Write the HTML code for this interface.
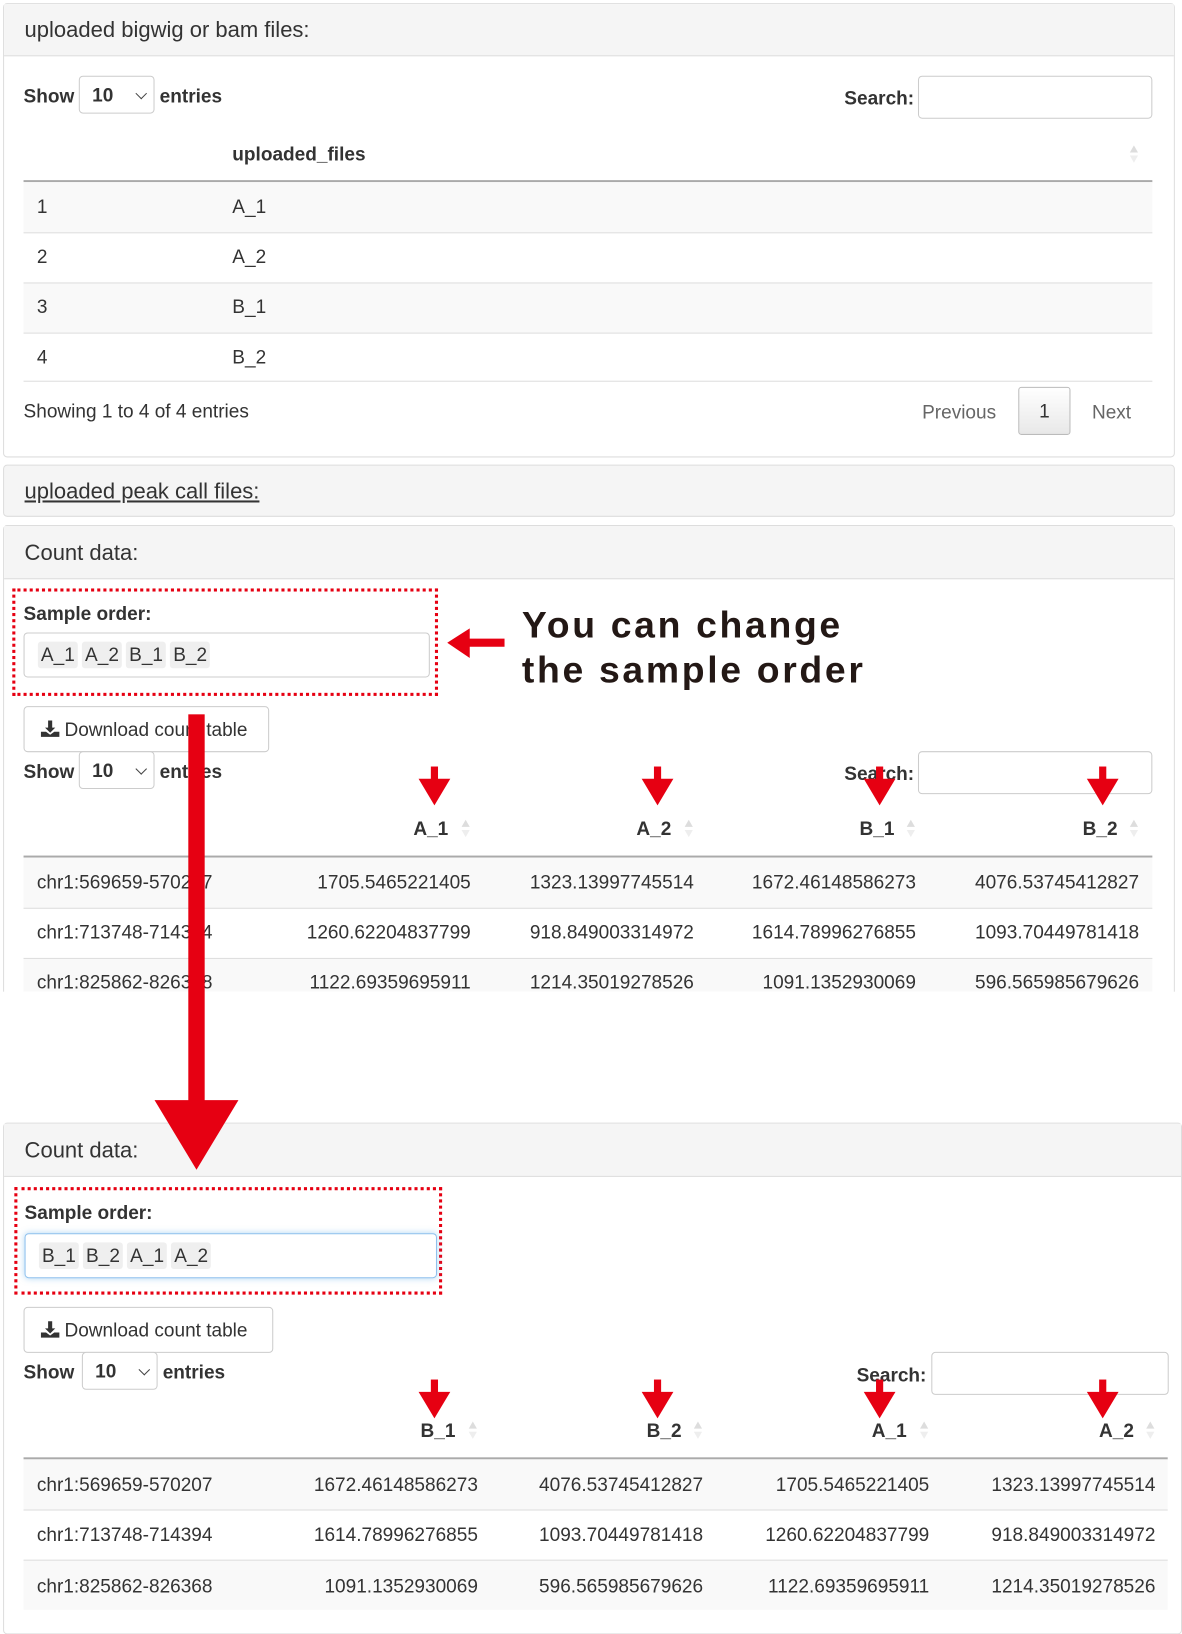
<!DOCTYPE html>
<html><head><meta charset="utf-8"><style>
*{box-sizing:border-box;margin:0;padding:0}
body{width:1182px;height:1608px;overflow:hidden;background:#fff;font-family:"Liberation Sans",Arial,sans-serif;color:#333}
#w{position:absolute;left:0;top:0;width:1155px;height:1572px;transform:scale(1.0234);transform-origin:0 0}
.a{position:absolute}
.panel{position:absolute;border:1px solid #ddd;border-radius:4px;background:#fff}
.ph{position:absolute;left:0;right:0;top:0;background:#f5f5f5;border-bottom:1px solid #ddd;font-size:21.5px;padding-left:20px}
.t{position:absolute;font-size:18.6px;line-height:20px;white-space:nowrap}
.b{font-weight:bold}
.inp{position:absolute;border:1px solid #ccc;border-radius:4px;background:#fff}
.sel{position:absolute;border:1px solid #ccc;border-radius:4px;background:#fff;font-size:18.6px;font-weight:bold;padding-left:12px}
.sel:after{content:"";position:absolute;right:8px;top:50%;width:7px;height:7px;border-right:1.3px solid #444;border-bottom:1.3px solid #444;transform:translateY(-70%) rotate(45deg)}
.row{position:absolute;left:23px;height:49px;border-top:1px solid #ddd}
.st{background:#f9f9f9}
.hl{position:absolute;left:23px;height:2px;background:#aaa}
.r{text-align:right}
.tag{display:inline-block;background:#efefef;border-radius:3px;padding:2px 3px;margin-right:4px;font-size:18.6px}
.btn{position:absolute;border:1px solid #ccc;border-radius:4px;background:#fff;font-size:18.6px;padding-left:15px}
.btn svg{vertical-align:-2px;margin-right:4px}
.dot{position:absolute;border:3px dotted #e60012}
.sort{position:absolute;width:8px;height:18px}
.sort:before{content:"";position:absolute;left:0;top:0;border-left:4px solid transparent;border-right:4px solid transparent;border-bottom:7px solid #ddd}
.sort:after{content:"";position:absolute;left:0;top:10px;border-left:4px solid transparent;border-right:4px solid transparent;border-top:7px solid #eee}
</style></head><body><div id="w">

<!-- Panel 1 -->
<div class="panel" style="left:3px;top:3px;width:1145px;height:444px">
 <div class="ph" style="height:51px;line-height:51px">uploaded bigwig or bam files:</div>
</div>
<div class="t b" style="left:23px;top:84px">Show</div>
<div class="sel" style="left:77px;top:74px;width:74px;height:37px;line-height:35px">10</div>
<div class="t b" style="left:156px;top:84px">entries</div>
<div class="t b" style="left:825px;top:86px">Search:</div>
<div class="inp" style="left:897px;top:74px;width:229px;height:42px"></div>
<div class="t b" style="left:227px;top:141px">uploaded_files</div>
<div class="sort" style="left:1104px;top:142px"></div>
<div class="hl" style="top:176px;width:1103px"></div>
<div class="row st" style="top:178px;width:1103px;border-top:none"></div>
<div class="row" style="top:227px;width:1103px"></div>
<div class="row st" style="top:276px;width:1103px"></div>
<div class="row" style="top:325px;width:1103px;border-bottom:1px solid #ddd;height:48px"></div>
<div class="t" style="left:36px;top:192px">1</div><div class="t" style="left:227px;top:192px">A_1</div>
<div class="t" style="left:36px;top:241px">2</div><div class="t" style="left:227px;top:241px">A_2</div>
<div class="t" style="left:36px;top:290px">3</div><div class="t" style="left:227px;top:290px">B_1</div>
<div class="t" style="left:36px;top:339px">4</div><div class="t" style="left:227px;top:339px">B_2</div>
<div class="t" style="left:23px;top:392px">Showing 1 to 4 of 4 entries</div>
<div class="t" style="left:901px;top:393px;color:#666">Previous</div>
<div class="a" style="left:995px;top:378px;width:51px;height:47px;border:1px solid #bbb;border-radius:3px;background:linear-gradient(#fff,#e8e8e8);font-size:18.6px;text-align:center;line-height:45px">1</div>
<div class="t" style="left:1067px;top:393px;color:#666">Next</div>

<!-- Panel 2 -->
<div class="panel" style="left:3px;top:454px;width:1145px;height:51px;background:#f5f5f5">
 <div class="a" style="left:20px;top:0;line-height:50px;font-size:21.5px;text-decoration:underline">uploaded peak call files:</div>
</div>

<!-- Panel 3 -->
<div class="panel" style="left:3px;top:513px;width:1145px;height:470px">
 <div class="ph" style="height:52px;line-height:52px">Count data:</div>
</div>
<div class="dot" style="left:12px;top:575px;width:416px;height:105px"></div>
<div class="t b" style="left:23px;top:590px">Sample order:</div>
<div class="inp" style="left:23px;top:618px;width:397px;height:44px;padding:8px 0 0 13px"><span class="tag">A_1</span><span class="tag">A_2</span><span class="tag">B_1</span><span class="tag">B_2</span></div>
<svg class="a" style="left:435px;top:612px" width="60" height="34"><polygon points="2,16 24,2 24,12 58,12 58,20 24,20 24,31" fill="#e60012"/></svg>
<div class="a b" style="left:510px;top:589px;font-size:36.5px;line-height:44px;letter-spacing:2.6px;color:#231815;white-space:nowrap">You can change<br>the sample order</div>
<div class="btn" style="left:23px;top:690px;width:240px;height:45px;line-height:43px"><svg width="20" height="18" viewBox="0 0 20 18"><path d="M8 1h4v7h3l-5 5-5-5h3z" fill="#333"/><path d="M1 12h5l4 3 4-3h5v5H1z" fill="#333"/></svg>Download count table</div>
<div class="t b" style="left:23px;top:744px">Show</div>
<div class="sel" style="left:77px;top:734px;width:74px;height:37px;line-height:35px">10</div>
<div class="t b" style="left:156px;top:744px">entries</div>
<div class="t b" style="left:825px;top:746px">Search:</div>
<div class="inp" style="left:897px;top:734px;width:229px;height:42px"></div>
<div class="t b r" style="left:380px;width:58px;top:800px">A_1</div><div class="sort" style="left:451px;top:801px"></div>
<div class="t b r" style="left:598px;width:58px;top:800px">A_2</div><div class="sort" style="left:669px;top:801px"></div>
<div class="t b r" style="left:816px;width:58px;top:800px">B_1</div><div class="sort" style="left:886px;top:801px"></div>
<div class="t b r" style="left:1034px;width:58px;top:800px">B_2</div><div class="sort" style="left:1104px;top:801px"></div>
<div class="hl" style="top:836px;width:1103px"></div>
<div class="row st" style="top:838px;width:1103px;border-top:none"></div>
<div class="row" style="top:887px;width:1103px"></div>
<div class="row st" style="top:936px;width:1103px;height:33px"></div>
<div class="t" style="left:36px;top:852px">chr1:569659-570207</div>
<div class="t r" style="left:260px;width:200px;top:852px">1705.5465221405</div><div class="t r" style="left:478px;width:200px;top:852px">1323.13997745514</div><div class="t r" style="left:695px;width:200px;top:852px">1672.46148586273</div><div class="t r" style="left:913px;width:200px;top:852px">4076.53745412827</div>
<div class="t" style="left:36px;top:901px">chr1:713748-714394</div>
<div class="t r" style="left:260px;width:200px;top:901px">1260.62204837799</div><div class="t r" style="left:478px;width:200px;top:901px">918.849003314972</div><div class="t r" style="left:695px;width:200px;top:901px">1614.78996276855</div><div class="t r" style="left:913px;width:200px;top:901px">1093.70449781418</div>
<div class="a" style="left:0;top:936px;width:1155px;height:33px;overflow:hidden">
<div class="t" style="left:36px;top:14px">chr1:825862-826368</div>
<div class="t r" style="left:260px;width:200px;top:14px">1122.69359695911</div><div class="t r" style="left:478px;width:200px;top:14px">1214.35019278526</div><div class="t r" style="left:695px;width:200px;top:14px">1091.1352930069</div><div class="t r" style="left:913px;width:200px;top:14px">596.565985679626</div>
</div>
<div class="a" style="left:0;top:969px;width:1155px;height:128px;background:#fff"></div>

<!-- Panel 4 -->
<div class="panel" style="left:3px;top:1097px;width:1152px;height:500px">
 <div class="ph" style="height:52px;line-height:52px">Count data:</div>
</div>
<div class="dot" style="left:14px;top:1160px;width:418px;height:105px"></div>
<div class="t b" style="left:24px;top:1175px">Sample order:</div>
<div class="inp" style="left:24px;top:1205px;width:403px;height:44px;padding:8px 0 0 13px;border-color:#8fc1ee;box-shadow:0 0 6px rgba(102,175,233,.5)"><span class="tag">B_1</span><span class="tag">B_2</span><span class="tag">A_1</span><span class="tag">A_2</span></div>
<div class="btn" style="left:23px;top:1277px;width:244px;height:45px;line-height:43px"><svg width="20" height="18" viewBox="0 0 20 18"><path d="M8 1h4v7h3l-5 5-5-5h3z" fill="#333"/><path d="M1 12h5l4 3 4-3h5v5H1z" fill="#333"/></svg>Download count table</div>
<div class="t b" style="left:23px;top:1331px">Show</div>
<div class="sel" style="left:80px;top:1321px;width:74px;height:37px;line-height:35px">10</div>
<div class="t b" style="left:159px;top:1331px">entries</div>
<div class="t b" style="left:837px;top:1334px">Search:</div>
<div class="inp" style="left:910px;top:1321px;width:232px;height:42px"></div>
<div class="t b r" style="left:387px;width:58px;top:1388px">B_1</div><div class="sort" style="left:458px;top:1389px"></div>
<div class="t b r" style="left:608px;width:58px;top:1388px">B_2</div><div class="sort" style="left:678px;top:1389px"></div>
<div class="t b r" style="left:828px;width:58px;top:1388px">A_1</div><div class="sort" style="left:899px;top:1389px"></div>
<div class="t b r" style="left:1050px;width:58px;top:1388px">A_2</div><div class="sort" style="left:1120px;top:1389px"></div>
<div class="hl" style="top:1424px;width:1118px"></div>
<div class="row st" style="top:1426px;width:1118px;border-top:none"></div>
<div class="row" style="top:1475px;width:1118px"></div>
<div class="row st" style="top:1524px;width:1118px"></div>
<div class="t" style="left:36px;top:1441px">chr1:569659-570207</div>
<div class="t r" style="left:267px;width:200px;top:1441px">1672.46148586273</div><div class="t r" style="left:487px;width:200px;top:1441px">4076.53745412827</div><div class="t r" style="left:708px;width:200px;top:1441px">1705.5465221405</div><div class="t r" style="left:929px;width:200px;top:1441px">1323.13997745514</div>
<div class="t" style="left:36px;top:1490px">chr1:713748-714394</div>
<div class="t r" style="left:267px;width:200px;top:1490px">1614.78996276855</div><div class="t r" style="left:487px;width:200px;top:1490px">1093.70449781418</div><div class="t r" style="left:708px;width:200px;top:1490px">1260.62204837799</div><div class="t r" style="left:929px;width:200px;top:1490px">918.849003314972</div>
<div class="t" style="left:36px;top:1540px">chr1:825862-826368</div>
<div class="t r" style="left:267px;width:200px;top:1540px">1091.1352930069</div><div class="t r" style="left:487px;width:200px;top:1540px">596.565985679626</div><div class="t r" style="left:708px;width:200px;top:1540px">1122.69359695911</div><div class="t r" style="left:929px;width:200px;top:1540px">1214.35019278526</div>

<!-- Red arrows -->
<svg class="a" style="left:0;top:0" width="1155" height="1572">
 <g fill="#e60012">
  <rect x="184" y="698" width="16" height="380"/>
  <polygon points="151,1075 233,1075 192,1143"/>
  <g id="ar"><rect x="421" y="749" width="7" height="14"/><polygon points="409,761 440,761 424.5,787"/></g>
  <use href="#ar" x="218"/><use href="#ar" x="435"/><use href="#ar" x="653"/>
  <g transform="translate(0,599)"><use href="#ar"/><use href="#ar" x="218"/><use href="#ar" x="435"/><use href="#ar" x="653"/></g>
 </g>
</svg>
</div></body></html>
